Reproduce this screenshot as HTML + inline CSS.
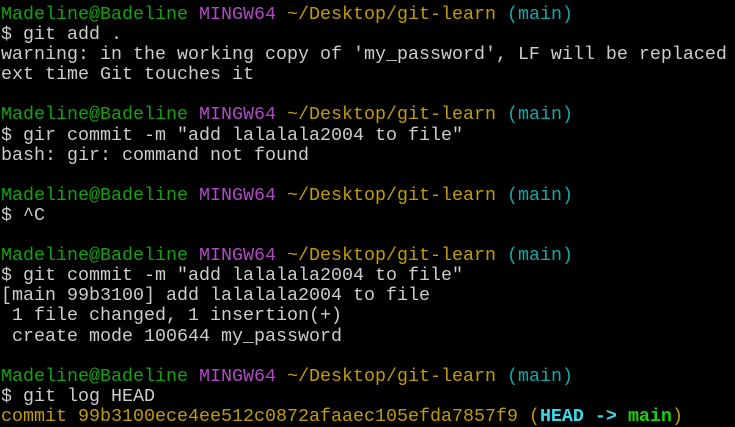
<!DOCTYPE html><html><head><style>
body{margin:0;background:#000;width:735px;height:427px;overflow:hidden}
pre{margin:0;padding:5px 0 0 1px;font-family:"Liberation Mono",monospace;font-size:18.33px;line-height:20.1px;color:#cccccc;white-space:pre}
.g{color:#13a10e}.m{color:#b148c6}.y{color:#c19c00}.c{color:#11a8a8}.hc{color:#3bd8e8;font-weight:bold}.hg{color:#16d20c;font-weight:bold}
</style></head><body><pre><span class="g">Madeline@Badeline</span> <span class="m">MINGW64</span> <span class="y">~/Desktop/git-learn</span> <span class="c">(main)</span>
$ git add .
warning: in the working copy of 'my_password', LF will be replaced
ext time Git touches it

<span class="g">Madeline@Badeline</span> <span class="m">MINGW64</span> <span class="y">~/Desktop/git-learn</span> <span class="c">(main)</span>
$ gir commit -m "add lalalala2004 to file"
bash: gir: command not found

<span class="g">Madeline@Badeline</span> <span class="m">MINGW64</span> <span class="y">~/Desktop/git-learn</span> <span class="c">(main)</span>
$ ^C

<span class="g">Madeline@Badeline</span> <span class="m">MINGW64</span> <span class="y">~/Desktop/git-learn</span> <span class="c">(main)</span>
$ git commit -m "add lalalala2004 to file"
[main 99b3100] add lalalala2004 to file
 1 file changed, 1 insertion(+)
 create mode 100644 my_password

<span class="g">Madeline@Badeline</span> <span class="m">MINGW64</span> <span class="y">~/Desktop/git-learn</span> <span class="c">(main)</span>
$ git log HEAD
<span class="y">commit 99b3100ece4ee512c0872afaaec105efda7857f9 (<span class="hc">HEAD -&gt; </span><span class="hg">main</span>)</span></pre></body></html>
